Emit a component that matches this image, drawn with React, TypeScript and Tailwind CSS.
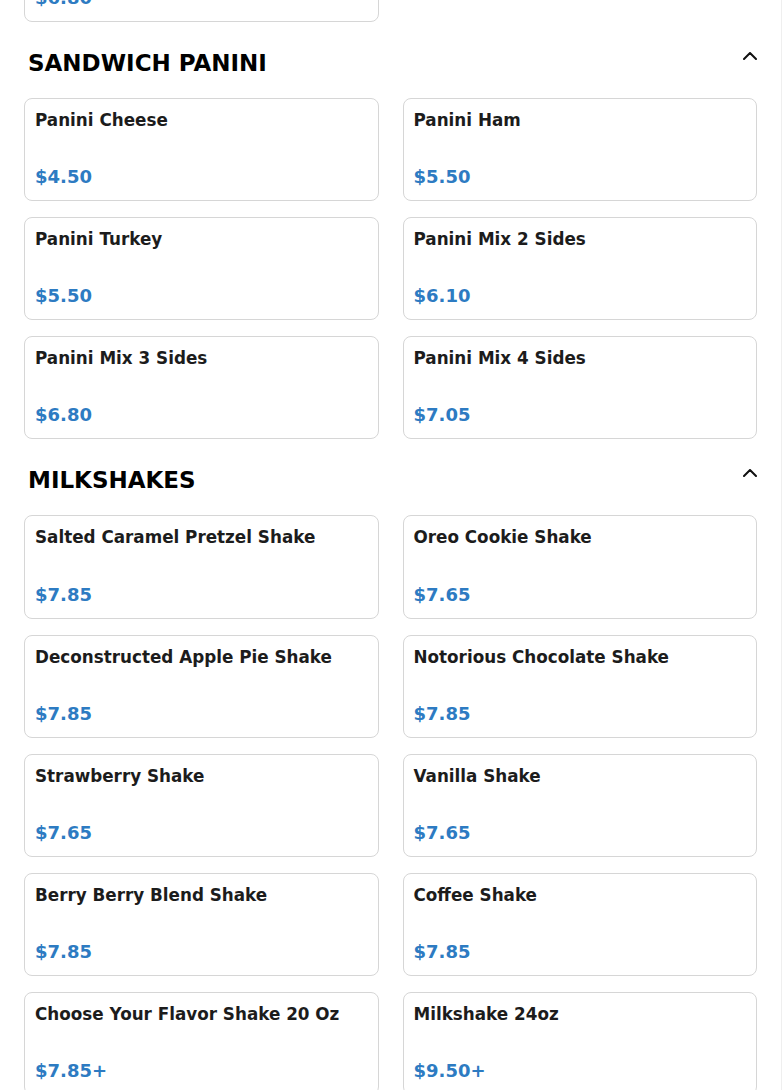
import React from "react";

type Item = { name: string; price: string };

const sections: { title: string | null; items: Item[] }[] = [
  { title: null, items: [{ name: "Panini Veggie", price: "$6.80" }] },
  {
    title: "SANDWICH PANINI",
    items: [
      { name: "Panini Cheese", price: "$4.50" },
      { name: "Panini Ham", price: "$5.50" },
      { name: "Panini Turkey", price: "$5.50" },
      { name: "Panini Mix 2 Sides", price: "$6.10" },
      { name: "Panini Mix 3 Sides", price: "$6.80" },
      { name: "Panini Mix 4 Sides", price: "$7.05" },
    ],
  },
  {
    title: "MILKSHAKES",
    items: [
      { name: "Salted Caramel Pretzel Shake", price: "$7.85" },
      { name: "Oreo Cookie Shake", price: "$7.65" },
      { name: "Deconstructed Apple Pie Shake", price: "$7.85" },
      { name: "Notorious Chocolate Shake", price: "$7.85" },
      { name: "Strawberry Shake", price: "$7.65" },
      { name: "Vanilla Shake", price: "$7.65" },
      { name: "Berry Berry Blend Shake", price: "$7.85" },
      { name: "Coffee Shake", price: "$7.85" },
      { name: "Choose Your Flavor Shake 20 Oz", price: "$7.85+" },
      { name: "Milkshake 24oz", price: "$9.50+" },
    ],
  },
];

function MenuCard({ item }: { item: Item }) {
  return (
    <div className="h-[103.2px] flex flex-col justify-between rounded-lg border border-[#d6d6d6] bg-white px-[10px] pt-[9px] pb-[11px]">
      <div className="text-[16.8px] leading-6 font-bold text-[#1c1c1c]">{item.name}</div>
      <div className="text-[18px] leading-6 font-bold text-[#2d7bc2]">{item.price}</div>
    </div>
  );
}

function Chevron() {
  return (
    <svg width="14" height="8" viewBox="0 0 14 8" fill="none" className="mt-[10px] shrink-0">
      <path d="M1 7L7 1l6 6" stroke="#111" strokeWidth="2" strokeLinecap="round" strokeLinejoin="round" />
    </svg>
  );
}

export default function App() {
  return (
    <div className="h-[1090px] overflow-hidden bg-white" style={{ fontFamily: '"DejaVu Sans", sans-serif' }}>
      <div className="w-[781px] border-r border-[#efefef] box-content min-h-full">
        <div className="px-6 -mt-[81.4px]">
          {sections.map((s, i) => (
            <section key={i}>
              {s.title && (
                <div className="mt-5 mb-[13px] h-[43px] flex items-start justify-between pl-1">
                  <h2 className="self-center text-[23px] leading-[43px] font-bold text-black">{s.title}</h2>
                  <Chevron />
                </div>
              )}
              <div className="grid grid-cols-2 gap-x-6 gap-y-4">
                {s.items.map((it) => (
                  <MenuCard key={it.name} item={it} />
                ))}
              </div>
            </section>
          ))}
        </div>
      </div>
    </div>
  );
}
